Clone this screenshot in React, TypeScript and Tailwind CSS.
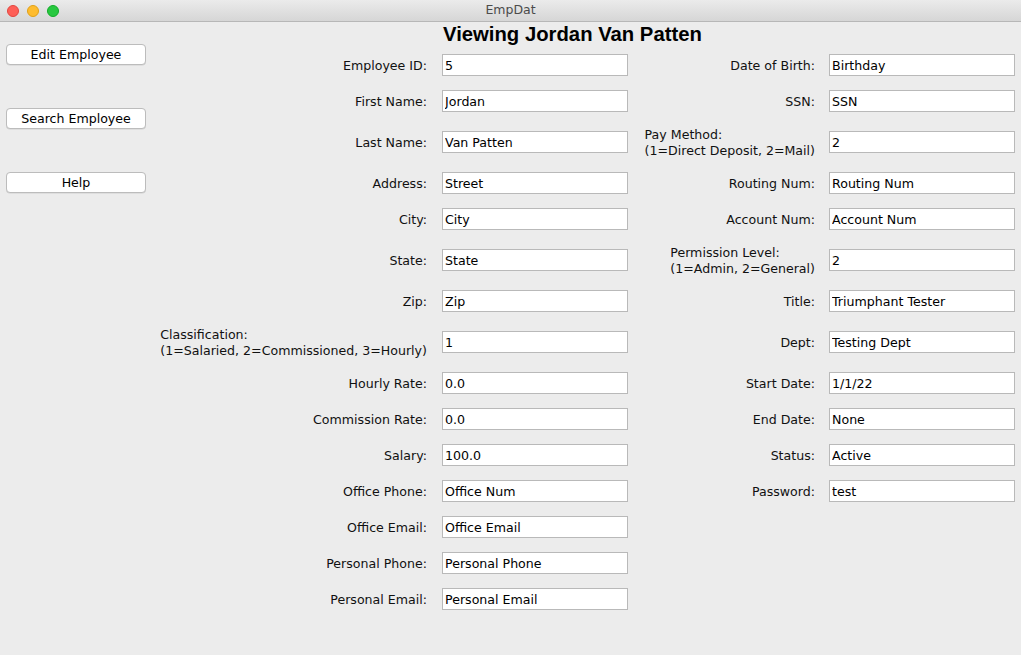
import React from "react";

type Row = {
  left: string[];
  leftVal: string;
  right?: string[];
  rightVal?: string;
  tall?: boolean;
};

const rows: Row[] = [
  { left: ["Employee ID:"], leftVal: "5", right: ["Date of Birth:"], rightVal: "Birthday" },
  { left: ["First Name:"], leftVal: "Jordan", right: ["SSN:"], rightVal: "SSN" },
  {
    left: ["Last Name:"],
    leftVal: "Van Patten",
    right: ["Pay Method:", "(1=Direct Deposit, 2=Mail)"],
    rightVal: "2",
    tall: true,
  },
  { left: ["Address:"], leftVal: "Street", right: ["Routing Num:"], rightVal: "Routing Num" },
  { left: ["City:"], leftVal: "City", right: ["Account Num:"], rightVal: "Account Num" },
  {
    left: ["State:"],
    leftVal: "State",
    right: ["Permission Level:", "(1=Admin, 2=General)"],
    rightVal: "2",
    tall: true,
  },
  { left: ["Zip:"], leftVal: "Zip", right: ["Title:"], rightVal: "Triumphant Tester" },
  {
    left: ["Classification:", "(1=Salaried, 2=Commissioned, 3=Hourly)"],
    leftVal: "1",
    right: ["Dept:"],
    rightVal: "Testing Dept",
    tall: true,
  },
  { left: ["Hourly Rate:"], leftVal: "0.0", right: ["Start Date:"], rightVal: "1/1/22" },
  { left: ["Commission Rate:"], leftVal: "0.0", right: ["End Date:"], rightVal: "None" },
  { left: ["Salary:"], leftVal: "100.0", right: ["Status:"], rightVal: "Active" },
  { left: ["Office Phone:"], leftVal: "Office Num", right: ["Password:"], rightVal: "test" },
  { left: ["Office Email:"], leftVal: "Office Email" },
  { left: ["Personal Phone:"], leftVal: "Personal Phone" },
  { left: ["Personal Email:"], leftVal: "Personal Email" },
];

function Label({ lines, pad }: { lines: string[]; pad: string }) {
  return (
    <div className={`flex items-center justify-end pt-[2px] ${pad}`}>
      <div className="text-left leading-[16px]">
        {lines.map((l) => (
          <div key={l}>{l}</div>
        ))}
      </div>
    </div>
  );
}

function Field({ value }: { value: string }) {
  return (
    <div className="flex items-center">
      <input
        readOnly
        value={value}
        className="h-[22px] w-[186px] border border-[#b9b9b9] bg-white px-[2px] text-[12.6px] text-black outline-none"
      />
    </div>
  );
}

function SideButton({ label }: { label: string }) {
  return (
    <button className="h-[21px] w-[140px] rounded-[4px] border border-[#bcbcbc] bg-white text-[12.6px] leading-[19px] text-black shadow-[0_0.5px_0.5px_rgba(0,0,0,0.12)]">
      {label}
    </button>
  );
}

export default function App() {
  return (
    <div
      className="flex h-[655px] w-[1021px] flex-col overflow-hidden bg-[#ececec] text-[12.6px] text-[#111]"
      style={{ fontFamily: '"DejaVu Sans", sans-serif' }}
    >
      {/* title bar */}
      <div className="relative flex h-[22px] items-center justify-center border-b border-[#b7b7b7] bg-gradient-to-b from-[#ebebeb] to-[#d6d6d6]">
        <div className="absolute left-[7px] top-[5px] flex gap-[8px]">
          <span className="h-[12px] w-[12px] rounded-full border border-[#e2463f] bg-[#fe5f57]" />
          <span className="h-[12px] w-[12px] rounded-full border border-[#e1a116] bg-[#febc2e]" />
          <span className="h-[12px] w-[12px] rounded-full border border-[#12ac28] bg-[#28c840]" />
        </div>
        <span className="text-[12.5px] text-[#4b4b4b]">EmpDat</span>
      </div>

      <div className="flex">
        {/* sidebar */}
        <div className="flex w-[155px] flex-col gap-[43px] pl-[6px] pt-[22px]">
          <SideButton label="Edit Employee" />
          <SideButton label="Search Employee" />
          <SideButton label="Help" />
        </div>

        {/* form */}
        <div className="grid grid-cols-[287px_186px_201px_186px]">
          <div
            className="col-span-3 col-start-2 flex h-[25px] items-center pl-px text-[20.3px] font-bold text-black"
            style={{ fontFamily: '"Liberation Sans", Arial, sans-serif' }}
          >
            Viewing Jordan Van Patten
          </div>
          {rows.map((r, i) => (
            <React.Fragment key={i}>
              <div className={r.tall ? "grid h-[46px]" : "grid h-[36px]"}>
                <Label lines={r.left} pad="pr-[15px]" />
              </div>
              <Field value={r.leftVal} />
              {r.right ? (
                <>
                  <Label lines={r.right} pad="pr-[14px]" />
                  <Field value={r.rightVal ?? ""} />
                </>
              ) : (
                <>
                  <div />
                  <div />
                </>
              )}
            </React.Fragment>
          ))}
        </div>
      </div>
    </div>
  );
}
